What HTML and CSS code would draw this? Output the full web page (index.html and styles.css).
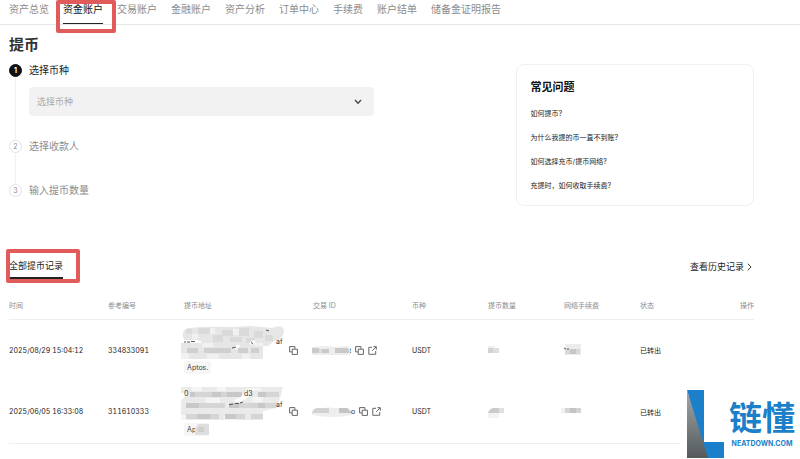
FILE: index.html
```
<!DOCTYPE html>
<html lang="zh-CN">

<head>
  <meta charset="UTF-8">
  <meta name="viewport" content="width=device-width, initial-scale=1.0">
  <title>提币</title>
  <link rel="stylesheet" href="styles.css">
</head>

<body>
  <!-- 公用图标 -->
  <svg class="sprite" width="0" height="0" aria-hidden="true">
    <symbol id="copy" viewBox="0 0 9 9">
      <path d="M2.900 5.900H.6V.6h5.300v2.300M3.200 3.200h5.200v5.200H3.200z" />
    </symbol>
    <symbol id="open" viewBox="0 0 9 9">
      <path d="M4 1.300H.8v7h6.900V5M5.300.7h3v3M8.200.8L4.200 4.800" />
    </symbol>
  </svg>

  <div class="page">
    <nav class="nav">
      <a href="#">资产总览</a>
      <a href="#" class="active">资金账户<span class="mark mark-nav"></span></a>
      <a href="#">交易账户</a>
      <a href="#">金融账户</a>
      <a href="#">资产分析</a>
      <a href="#">订单中心</a>
      <a href="#">手续费</a>
      <a href="#">账户结单</a>
      <a href="#">储备金证明报告</a>
    </nav>

    <main class="main">
      <h1>提币</h1>
      <div class="top">
        <ol class="steps">
          <li class="current">
            <span class="num">1</span>
            <div class="step-body">
              <label for="coin">选择币种</label>
              <div class="select-box">
                <select id="coin">
                  <option>选择币种</option>
                  <option>USDT</option>
                </select>
                <svg class="arrow" width="8" height="6" viewBox="0 0 8 6">
                  <path d="M1 1l3 3.200L7 1" />
                </svg>
              </div>
            </div>
          </li>
          <li>
            <span class="num">2</span>
            <div class="step-body">选择收款人</div>
          </li>
          <li>
            <span class="num">3</span>
            <div class="step-body">输入提币数量</div>
          </li>
        </ol>

        <section class="faq">
          <h2>常见问题</h2>
          <ul>
            <li><a href="#">如何提币?</a></li>
            <li><a href="#">为什么我提的币一直不到账?</a></li>
            <li><a href="#">如何选择充币/提币网络?</a></li>
            <li><a href="#">充提时，如何收取手续费?</a></li>
          </ul>
        </section>
      </div>

      <section class="records">
        <div class="records-head">
          <a href="#" class="tab">全部提币记录<span class="mark mark-tab"></span></a>
          <a href="#" class="more">查看历史记录
            <svg width="5" height="8" viewBox="0 0 5 8">
              <path d="M.8.7l3.300 3.300L.8 7.300" />
            </svg>
          </a>
        </div>

        <table>
          <thead>
            <tr>
              <th class="c-time">时间</th>
              <th class="c-ref">参考编号</th>
              <th class="c-addr">提币地址</th>
              <th class="c-tx">交易 ID</th>
              <th class="c-coin">币种</th>
              <th class="c-num">提币数量</th>
              <th class="c-fee">网络手续费</th>
              <th class="c-state">状态</th>
              <th class="c-op">操作</th>
            </tr>
          </thead>
          <tbody>
            <tr>
              <td>2025/08/29 15:04:12</td>
              <td>334833091</td>
              <td>
                <div class="addr">
                  <div>
                    <svg class="mosaic" width="100" height="34" viewBox="0 0 100 34">
                      <text x="0" y="18">5e</text>
                      <text x="92" y="18">af</text>
                      <path fill="#e6e6e6" d="M4 2Q25 0 48 1L66 0 88 2Q100-3 100 6 99 13 90 15L84 20H79V33H-3V17H0V13Q-4 5 4 2z" />
                      <path fill="#dadada" d="M2 3h6v5H2zM14 2h12v6H14zM38 4h11v6H38zM55 2h10v8H55zM70 5h9v7h-9zM29 9h10v7H29zM46 11h12v5H46zM62 12h9v5h-9zM81 9h8v6h-8z" />
                      <path fill="#f1f1f1" d="M8 8h6v5H8zM26 2h5v6h-5zM49 3h6v6h-6zM18 17h11v4H18zM70 17h9v3h-9zM-3 27h8v6h-8zM23 28h12v5H23zM58 28h8v5h-8z" />
                      <path fill="#cfcfcf" d="M3 22h11v5H3zM20 22h27v5H20zM54 22h10v5H54zM67 22h8v5h-8z" />
                      <path fill="#fff" d="M0 14h12l5 1v2H0zM50 21q3-3 6-2 0 3-5 4zM65 17l5-3 2 2-5 3z" />
                      <path class="ink" d="M0 16h2M3 16h3M7 15.500h4M48 22l4-1M67 16.500l2 1M82 4l3 1" />
                    </svg>
                    <span class="tag">Aptos.</span>
                  </div>
                  <button type="button" aria-label="复制地址"><svg class="ico"><use href="#copy" /></svg></button>
                </div>
              </td>
              <td>
                <div class="tx">
                  <svg class="mosaic" width="38" height="9" viewBox="0 0 38 9">
                    <text x="36" y="7">t</text>
                    <path fill="#ededed" d="M-1 1Q12-1 22 1l12-1 3 2v7H-1z" />
                    <path fill="#c9c9c9" d="M-1 2h7v5h-7zM9 3h7v4H9zM22 2h12q3 2 2 5H22z" />
                    <path fill="#dcdcdc" d="M6 3h3v4H6z" />
                  </svg>
                  <button type="button" aria-label="复制交易 ID"><svg class="ico"><use href="#copy" /></svg></button>
                  <a href="#" aria-label="查看交易"><svg class="ico"><use href="#open" /></svg></a>
                </div>
              </td>
              <td>USDT</td>
              <td>
                <svg class="mosaic" width="16" height="10" viewBox="0 0 16 10">
                  <path fill="#eee" d="M0 1h7v3H0z" />
                  <path fill="#d2d2d2" d="M0 3h5v5H0z" />
                  <path fill="#dfdfdf" d="M5 3h6v5H5z" />
                </svg>
              </td>
              <td>
                <svg class="mosaic" width="17" height="12" viewBox="0 0 17 12">
                  <path fill="#ececec" d="M1 0h16v11H1z" />
                  <path fill="#d8d8d8" d="M1 5h5v5H1zM11 5h5v5h-5z" />
                  <path fill="#c6c6c6" d="M6 5h6v5H6z" />
                  <path class="ink" d="M0 4l2 1M3 5h2" />
                </svg>
              </td>
              <td>已转出</td>
              <td></td>
            </tr>
            <tr>
              <td>2025/06/05 16:33:08</td>
              <td>311610333</td>
              <td>
                <div class="addr">
                  <div>
                    <svg class="mosaic" width="100" height="34" viewBox="0 0 100 34">
                      <path fill="#eaeaea" d="M-3-1H99L96 10 92 20 79 23V32H-3V13L4 5H-3z" />
                      <path fill="#f5f5f5" d="M8-1h10v4H8zM33-1h9v4h-9zM62 0h15v3H62zM22 10h14v5H22zM68 9h11v5H68zM-3 27h6v5h-6zM40 28h12v4H40z" />
                      <path fill="#c8c8c8" d="M6 4h5v5H6zM28 4h9v5h-9zM43 4h15v5H43zM74 4h8v5h-8zM2 15h13v5H2zM45 15h10v5H45zM74 15h7v5h-7zM13 26h13v5H13zM41 26h11v5H41z" />
                      <path fill="#d5d5d5" d="M11 4h17v5H11zM37 4h6v5h-6zM82 4h13v5H82zM15 15h14v5H15zM29 15h12v5H29zM55 15h19v5H55zM81 15h11v5H81zM2 26h11v5H2zM26 26h9v5h-9zM52 26h9v5h-9zM67 26h12v5H67z" />
                      <path fill="#fff" d="M50 12q8-2 11-8l4-1q2 5-5 9-6 3-10 1z" />
                      <text x="0" y="8">0</text>
                      <text x="60" y="8">d3</text>
                      <text x="92" y="19">af</text>
                      <path class="ink" d="M45 17l4-1M51 15.500h4M56 15l3-1" />
                    </svg>
                    <span class="tag">Apt<svg class="mosaic tag-cover" width="14" height="11" viewBox="0 0 14 11">
                        <path fill="#dedede" d="M3 0h11v11H0V5z" />
                        <path fill="#cecece" d="M3 3h6v5H3z" />
                      </svg></span>
                  </div>
                  <button type="button" aria-label="复制地址"><svg class="ico"><use href="#copy" /></svg></button>
                </div>
              </td>
              <td>
                <div class="tx">
                  <svg class="mosaic" width="42" height="9" viewBox="0 0 42 9">
                    <path fill="#eee" d="M-1 4Q12-1 22 1h14l3 3v4Q20 12-1 8z" />
                    <path fill="#d2d2d2" d="M-1 6q1-5 6-5h11v5z" />
                    <path fill="#c4c4c4" d="M26 1h8l5 5H26z" />
                    <text x="38" y="7">o</text>
                  </svg>
                  <button type="button" aria-label="复制交易 ID"><svg class="ico"><use href="#copy" /></svg></button>
                  <a href="#" aria-label="查看交易"><svg class="ico"><use href="#open" /></svg></a>
                </div>
              </td>
              <td>USDT</td>
              <td>
                <svg class="mosaic" width="16" height="10" viewBox="0 0 16 10">
                  <path fill="#f3f3f3" d="M0 6h11v5H0z" />
                  <path fill="#cbcbcb" d="M0 6q1-4 5-5h6v5z" />
                  <path fill="#e0e0e0" d="M11 1h5v5h-5z" />
                </svg>
              </td>
              <td>
                <svg class="mosaic" width="17" height="10" viewBox="0 0 17 10">
                  <path fill="#f0f0f0" d="M-3 1h4v5h-4z" />
                  <path fill="#d4d4d4" d="M1 1h16v5H1z" />
                  <path fill="#c4c4c4" d="M6 1h6v5H6z" />
                </svg>
              </td>
              <td>已转出</td>
              <td></td>
            </tr>
          </tbody>
        </table>
      </section>
    </main>

    <!-- 右下角水印 -->
    <div class="watermark">
      <svg width="37" height="68" viewBox="0 0 37 68">
        <defs>
          <linearGradient id="steel" x1="0" y1="0" x2="0" y2="1">
            <stop offset="0" stop-color="#a3a8aa" />
            <stop offset="1" stop-color="#54595b" />
          </linearGradient>
        </defs>
        <path fill="#1b7fc9" d="M0 0h17v52h20v16H18z" />
        <path fill="url(#steel)" d="M0 0l21 68H0z" />
      </svg>
      <div class="brand">
        <strong>链懂</strong>
        <span>NEATDOWN.COM</span>
      </div>
    </div>
  </div>
</body>

</html>
```
FILE: styles.css
```
* {
  margin: 0;
  padding: 0;
  box-sizing: border-box;
}

body {
  font-family: Inter, "Noto Sans CJK SC", sans-serif;
  font-size: 7px;
  color: #222;
  background-color: #fff;
}

a {
  color: inherit;
  text-decoration: none;
}

ul,
ol {
  list-style: none;
}

button {
  border: 0;
  background: none;
  cursor: pointer;
}

svg {
  display: block;
  fill: none;
}

.sprite {
  position: absolute;
}

.page {
  position: relative;
  min-height: 100vh;
  padding-bottom: 15px;
  overflow: hidden;
}

/* 导航 */
.nav {
  display: flex;
  gap: 14px;
  padding: 2px 9px 0;
  border-bottom: 1px solid #e6e6e6;
  font-size: 10px;
  line-height: 14px;
  color: #8c8c8c;
}

.nav a {
  position: relative;
  padding-bottom: 7px;
  border-bottom: 1px solid transparent;
}

.nav .active {
  color: #111;
  border-bottom-color: #222;
}

/* 红框标注 */
.mark {
  position: absolute;
  border: 4px solid #e25b5b;
  border-radius: 2px;
}

.mark-nav {
  inset: -2px -13px -10px -7px;
}

.mark-tab {
  inset: -10px -17px -6px -3px;
}

.main {
  padding: 10px 46px 0 9px;
}

h1 {
  font-size: 15px;
  line-height: 20px;
  color: #333;
}

.top {
  display: flex;
  justify-content: space-between;
  align-items: flex-start;
  margin-top: 9px;
}

/* 步骤 */
.steps {
  width: 49%;
  font-size: 10px;
  line-height: 13px;
  color: #8c8c8c;
}

.steps li {
  position: relative;
  display: flex;
  gap: 7px;
  padding-bottom: 31px;
}

.steps li.current {
  padding-bottom: 24px;
  color: #222;
}

.steps li:last-child {
  padding-bottom: 0;
}

.steps li:not(:last-child)::before {
  content: "";
  position: absolute;
  left: 6px;
  top: 13px;
  bottom: 0;
  width: 1px;
  background-color: #f0f0f0;
}

.num {
  flex: none;
  width: 13px;
  height: 13px;
  border: 1px solid #e2e2e2;
  border-radius: 50%;
  font-size: 7px;
  line-height: 11px;
  text-align: center;
}

.current .num {
  border-color: #111;
  background-color: #111;
  color: #fff;
  font-weight: bold;
}

.step-body {
  flex: 1;
}

.step-body label {
  display: block;
}

.select-box {
  position: relative;
  margin-top: 10px;
}

.select-box select {
  display: block;
  width: 100%;
  height: 29px;
  padding: 0 8px;
  border: 0;
  border-radius: 4px;
  background-color: #f2f2f2;
  color: #aaa;
  font-family: inherit;
  font-size: 9px;
  appearance: none;
}

.arrow {
  position: absolute;
  right: 12px;
  top: 12px;
  stroke: #444;
  stroke-width: 1.3;
  pointer-events: none;
}

/* 常见问题 */
.faq {
  width: 32%;
  padding: 14px 14px 13px;
  border: 1px solid #f0f0f0;
  border-radius: 8px;
}

.faq h2 {
  font-size: 11px;
  line-height: 16px;
  color: #111;
}

.faq ul {
  display: grid;
  gap: 12px;
  margin-top: 13px;
  line-height: 12px;
}

/* 提币记录 */
.records {
  margin-top: 53px;
}

.records-head {
  display: flex;
  justify-content: space-between;
  font-size: 9px;
  line-height: 14px;
}

.tab {
  position: relative;
  padding-bottom: 4px;
  border-bottom: 2px solid #222;
}

.more {
  display: flex;
  align-items: center;
  gap: 3px;
  height: 16px;
  margin-right: 2px;
}

.more svg {
  stroke: #333;
}

table {
  width: 100%;
  margin-top: 13px;
  table-layout: fixed;
  border-collapse: collapse;
  border-bottom: 1px solid #eee;
  font-variant-numeric: tabular-nums;
}

th {
  height: 27px;
  border-bottom: 1px solid #eee;
  font-weight: normal;
  text-align: left;
  color: #8c8c8c;
}

td {
  height: 62px;
  white-space: nowrap;
}

.c-time,
.c-tx {
  width: 13.3%;
}

.c-addr {
  width: 17.3%;
}

.c-ref,
.c-coin,
.c-num,
.c-fee {
  width: 10.2%;
}

th.c-op {
  text-align: right;
}

.addr {
  display: flex;
  align-items: center;
  gap: 5px;
}

.tx {
  display: flex;
  align-items: center;
  gap: 4px;
}

.ico {
  width: 9px;
  height: 9px;
  stroke: #666;
  stroke-width: 1;
}

/* 打码区域 */
.mosaic {
  overflow: visible;
}

.mosaic text {
  fill: #333;
  font-size: 7px;
}

.mosaic .ink {
  stroke: #555;
  stroke-width: 1;
}

.tag {
  display: inline-flex;
  align-items: center;
  height: 13px;
  margin-top: 1px;
  padding: 0 3px;
  border-radius: 2px;
  background-color: #f6f6f6;
  color: #444;
}

.tag-cover {
  margin: 0 -3px 0 -3px;
}

/* 水印 */
.watermark {
  position: absolute;
  right: 0;
  bottom: 0;
  display: flex;
  gap: 5px;
  padding: 2px 5px 1px 7px;
  background-color: #fff;
  color: #1b7fc9;
}

.brand {
  padding-top: 10px;
  text-align: center;
}

.brand strong {
  display: block;
  font-family: "Liberation Sans", "Noto Sans CJK SC", sans-serif;
  font-size: 33px;
  font-weight: bold;
  line-height: 38px;
}

.brand span {
  display: block;
  margin-top: 1px;
  font-weight: bold;
  line-height: 9px;
}
```
